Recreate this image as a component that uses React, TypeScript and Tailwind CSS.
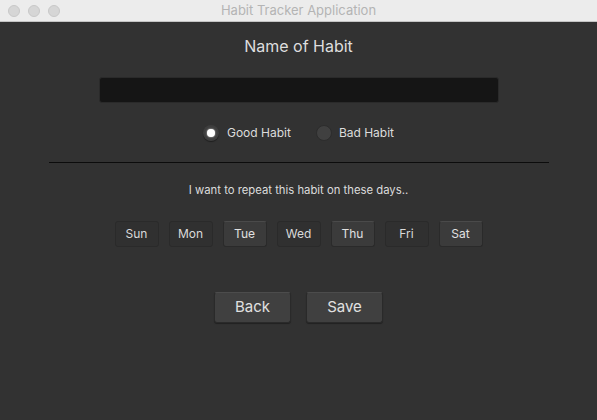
const days = [
    { label: 'Sun', on: false },
    { label: 'Mon', on: false },
    { label: 'Tue', on: true },
    { label: 'Wed', on: false },
    { label: 'Thu', on: true },
    { label: 'Fri', on: false },
    { label: 'Sat', on: true },
];

const font = { fontFamily: 'Inter, "Noto Sans", sans-serif' };

export default function App() {
    return (
        <div className="flex h-[420px] w-[597px] flex-col bg-[#323232]" style={font}>
            {/* title bar */}
            <div className="relative flex h-[22px] items-center justify-center border-b border-[#c4c4c4] bg-[#ececec]">
                <div className="absolute left-[8px] top-[5px] flex gap-[8px]">
                    <span className="h-[12px] w-[12px] rounded-full border border-[#c8c8c8] bg-[#d6d6d6]" />
                    <span className="h-[12px] w-[12px] rounded-full border border-[#c8c8c8] bg-[#d6d6d6]" />
                    <span className="h-[12px] w-[12px] rounded-full border border-[#c8c8c8] bg-[#d6d6d6]" />
                </div>
                <span className="text-[13px] text-[#b4b4b4]">Habit Tracker Application</span>
            </div>

            <div className="flex flex-col items-center">
                <h1 className="mt-[14px] text-[16px] leading-[20px] text-[#dedede]">Name of Habit</h1>

                <input
                    className="mt-[21px] h-[26px] w-[400px] rounded-[3px] border border-[#2a2a2a] bg-[#151515] px-2 text-[13px] text-[#ddd] outline-none"
                    defaultValue=""
                />

                <div className="mt-[22px] flex h-[16px] items-center text-[12px] text-[#dcdcdc]">
                    <div className="flex items-center gap-[8px]">
                        <span className="flex h-[16px] w-[16px] items-center justify-center rounded-full bg-[#3e3e3e] shadow-[0_1px_1px_rgba(0,0,0,0.4)]">
                            <span className="h-[8px] w-[8px] rounded-full bg-white shadow-[0_0_2px_rgba(255,255,255,0.8)]" />
                        </span>
                        <span>Good Habit</span>
                    </div>
                    <div className="ml-[25px] flex items-center gap-[7px]">
                        <span className="h-[16px] w-[16px] rounded-full border border-[#2c2c2c] bg-[#404040]" />
                        <span>Bad Habit</span>
                    </div>
                </div>

                <div className="mt-[21px] h-px w-[500px] bg-[#0c0c0c]" />

                <p className="mt-[19px] text-[11.3px] leading-[16px] text-[#dcdcdc]">
                    I want to repeat this habit on these days..
                </p>

                <div className="mt-[23px] flex gap-[10px]">
                    {days.map((d) =>
                        d.on ? (
                            <button
                                key={d.label}
                                className="h-[26px] w-[44px] rounded-[3px] border border-[#2a2a2a] border-t-[#4a4a4a] bg-[#3b3b3b] text-[12px] text-[#e0e0e0]"
                            >
                                {d.label}
                            </button>
                        ) : (
                            <button
                                key={d.label}
                                className="h-[26px] w-[44px] rounded-[3px] border border-[#2a2a2a] bg-[#303030] text-[12px] text-[#dadada]"
                            >
                                {d.label}
                            </button>
                        )
                    )}
                </div>

                <div className="mt-[45px] flex gap-[15px]">
                    <button className="h-[31px] w-[77px] rounded-[3px] border border-[#2a2a2a] border-t-[#4c4c4c] bg-[#404040] text-[15px] text-[#e0e0e0] shadow-[0_1px_1px_rgba(0,0,0,0.35)]">
                        Back
                    </button>
                    <button className="h-[31px] w-[77px] rounded-[3px] border border-[#2a2a2a] border-t-[#4c4c4c] bg-[#404040] text-[15px] text-[#e0e0e0] shadow-[0_1px_1px_rgba(0,0,0,0.35)]">
                        Save
                    </button>
                </div>
            </div>
        </div>
    );
}
